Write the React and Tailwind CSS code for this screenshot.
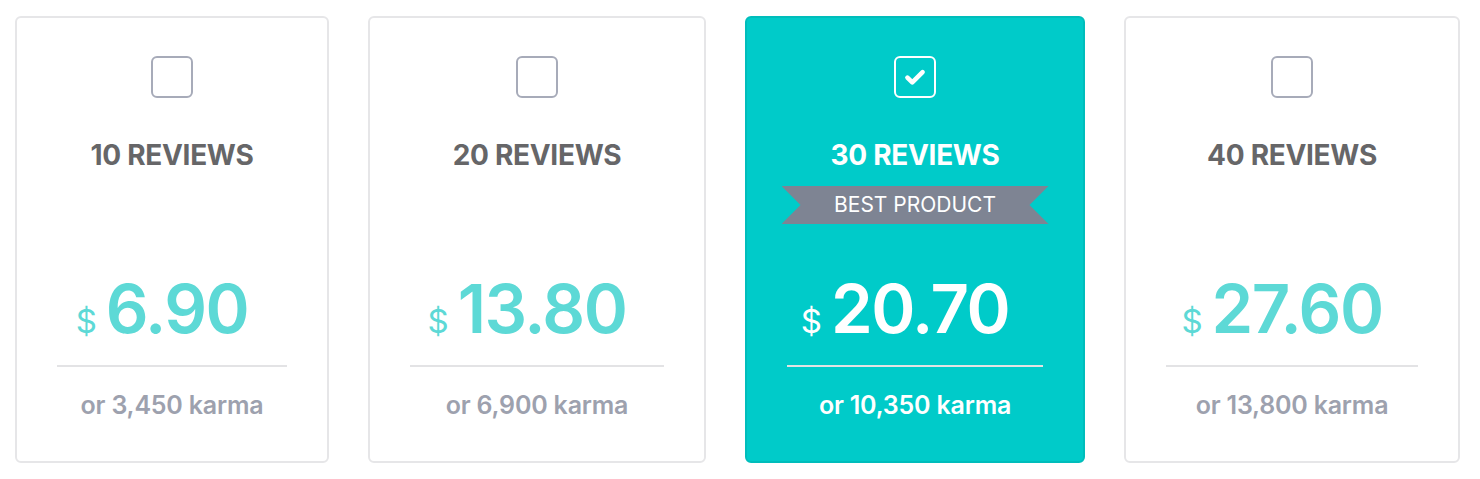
const plans = [
  { reviews: 10, price: "6.90", karma: "3,450", width: "w-[314px]" },
  { reviews: 20, price: "13.80", karma: "6,900", width: "w-[338px]" },
  { reviews: 30, price: "20.70", karma: "10,350", width: "w-[340px]", best: true },
  { reviews: 40, price: "27.60", karma: "13,800", width: "w-[336px]" },
]

const Checkbox = ({ checked }) => (
  <div
    className={
      "w-[42px] h-[42px] rounded-[6px] border-2 flex items-center justify-center " +
      (checked ? "border-white" : "border-[#a7abb9] bg-white")
    }
  >
    {checked && (
      <svg width="26" height="26" viewBox="0 0 24 24" fill="none">
        <path d="M5 12.5l4.5 4.5L19 7.5" stroke="white" strokeWidth="4.2" strokeLinecap="round" strokeLinejoin="round" />
      </svg>
    )}
  </div>
)

const PlanCard = ({ plan }) => {
  const sel = plan.best
  return (
    <div
      className={
        plan.width +
        " h-[447px] shrink-0 rounded-[6px] border-2 flex flex-col items-center pt-[38px] px-10 " +
        (sel ? "bg-[#00cbc9] border-[#00bdbb]" : "bg-white border-[#e6e6e8]")
      }
    >
      <Checkbox checked={sel} />
      <h2
        className={
          "mt-[41px] text-[28px] leading-[32px] font-bold tracking-[-0.3px] " +
          (sel ? "text-white" : "text-[#666668]")
        }
      >
        {plan.reviews} REVIEWS
      </h2>
      <div className="h-[38px] mt-[15px] w-full flex justify-center">
        {sel && (
          <div className="w-[267px] shrink-0 h-[38px] bg-[#7e8493] flex items-center justify-center text-white text-[21px] [clip-path:polygon(0_0,100%_0,calc(100%-19px)_50%,100%_100%,0_100%,19px_50%)]">
            BEST PRODUCT
          </div>
        )}
      </div>
      <div
        className={
          "mt-[51px] flex items-baseline justify-center pr-5 " +
          (sel ? "text-white" : "text-[#5dd9d6]")
        }
      >
        <span className="text-[33px] leading-none mr-[9px]">$</span>
        <span className="text-[67px] leading-none font-semibold tracking-[-1.5px]">{plan.price}</span>
      </div>
      <div className={"w-full h-[2px] mt-[23px] " + (sel ? "bg-[#e3e3e3]" : "bg-[#e3e3e5]")} />
      <p
        className={
          "mt-[23px] text-[25px] leading-[30px] font-semibold tracking-[-0.2px] " +
          (sel ? "text-white" : "text-[#9da1ae]")
        }
      >
        or {plan.karma} karma
      </p>
    </div>
  )
}

const App = () => {
  return (
    <div className="w-[1480px] h-[479px] bg-white pt-[16px] pl-[15px] flex gap-[39px] font-['Inter',sans-serif]">
      {plans.map((p) => (
        <PlanCard plan={p} key={p.reviews} />
      ))}
    </div>
  )
}

export default App
